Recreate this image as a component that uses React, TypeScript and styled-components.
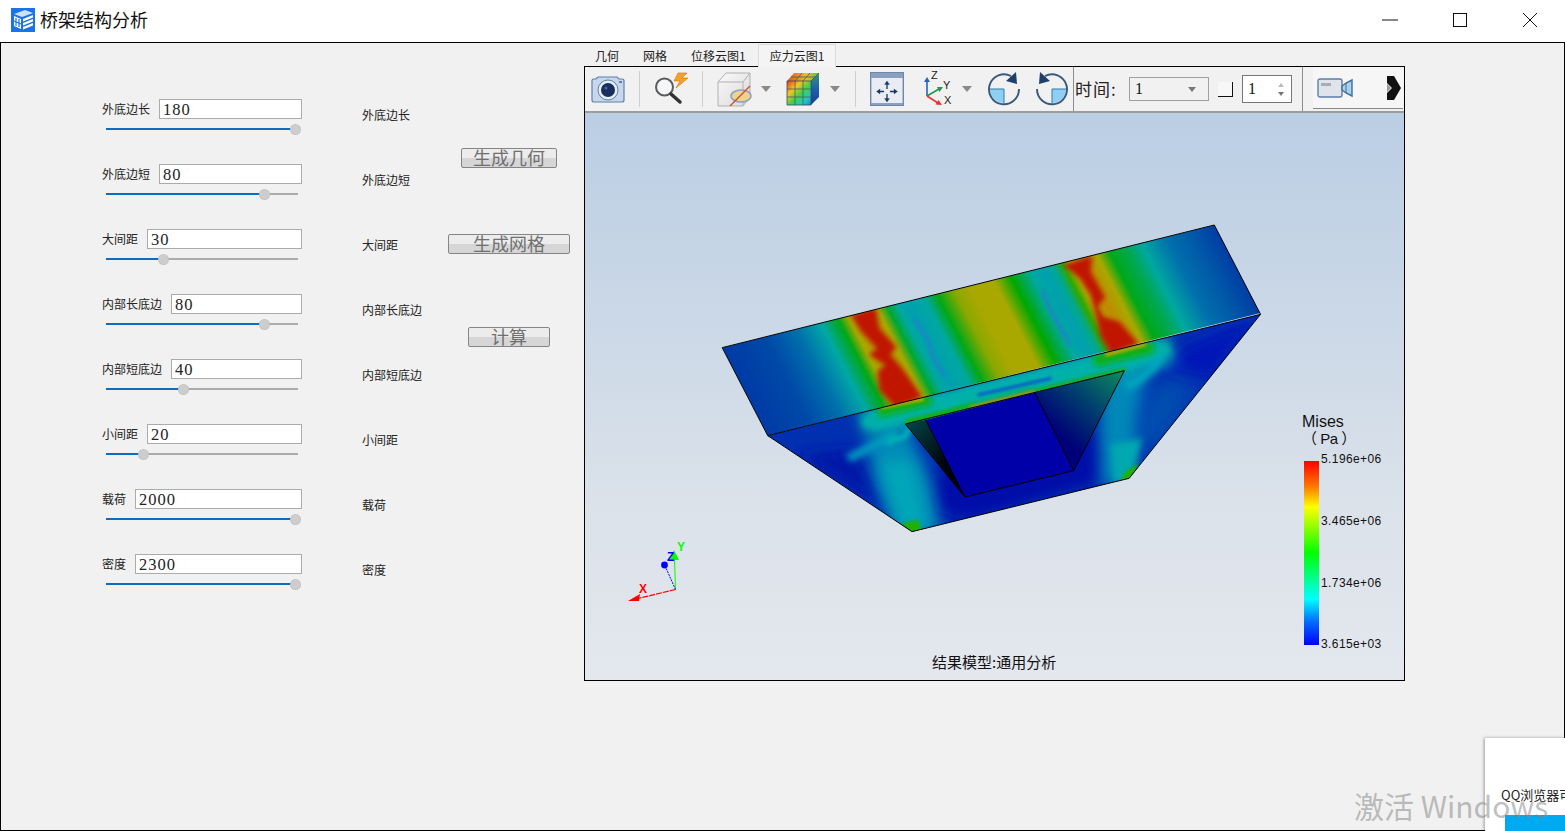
import React from "react";
import styled, { createGlobalStyle } from "styled-components";

const CJK = `"Noto Sans CJK SC", "Noto Sans", sans-serif`;
const SERIF = `"Liberation Serif", "Noto Sans CJK SC", serif`;

const Global = createGlobalStyle`
  html, body { margin: 0; padding: 0; background: #fff; overflow: hidden; }
  * { box-sizing: border-box; }
`;

const Page = styled.div`
  position: relative; width: 1565px; height: 831px; overflow: hidden;
  display: flex; flex-direction: column; background: #fff; font-family: ${CJK};
`;
const TitleBar = styled.header`
  height: 42px; display: flex; align-items: center; padding: 0 0 3px 11px; flex: none;
`;
const AppTitle = styled.h1`
  margin: -1px 0 0 5px; font-size: 18px; font-weight: 400; color: #111; line-height: 24px; flex: 1;
`;
const WinBtn = styled.div`
  width: 70px; height: 38px; display: flex; align-items: center; justify-content: center; flex: none;
`;
const Body = styled.main`
  flex: 1; display: flex; background: #f1f1f1; border: 1px solid #000; min-height: 0;
`;
const Form = styled.section`
  width: 201px; margin-left: 100px; padding-top: 56px; flex: none;
`;
const Field = styled.div`height: 65px;`;
const FieldHead = styled.div`display: flex; align-items: center; height: 20px; gap: 10px;`;
const FieldLabel = styled.span`font-size: 12px; line-height: 20px; color: #222; white-space: nowrap; padding-left: 1px; margin-right: -1px;`;
const FieldInput = styled.input`
  flex: 1; min-width: 0; height: 20px; border: 1px solid #ababab; background: #fff; padding: 2px 0 0 3px;
  font-family: ${SERIF}; font-size: 16.5px; letter-spacing: 1px; color: #222; outline: none; border-radius: 0;
`;
const Slider = styled.div`
  position: relative; margin: 5px 0 0 5px; width: 192px; height: 10px; display: flex; align-items: center;
`;
const Track = styled.div`width: 100%; height: 2px; background: #ababab;`;
const Fill = styled.div`position: absolute; left: 0; top: 4px; height: 2px; background: #0f6cbd;`;
const Thumb = styled.div`
  position: absolute; top: -0.5px; width: 11px; height: 11px; margin-left: -5px; border-radius: 50%;
  background: #cdcdcd; border: 1px dotted #bbb;
`;
const Captions = styled.section`
  width: 72px; margin-left: 60px; padding-top: 39px; flex: none;
`;
const Caption = styled.div`height: 65px; display: flex; align-items: center; font-size: 12px; color: #222; line-height: 65px;`;
const Actions = styled.section`
  width: 150px; flex: none; display: flex; flex-direction: column; align-items: center;
`;
const ActionBtn = styled.button<{ $w: number; $top: number }>`
  width: ${p => p.$w}px; height: 20px; margin-top: ${p => p.$top}px; padding: 0 0 2px;
  border: 1px solid #858585; border-radius: 2px;
  background: linear-gradient(#ececec 0 50%, #d6d6d6 50% 100%);
  font-family: ${CJK}; font-size: 18px; line-height: 18px; font-weight: 400; color: #707070;
  display: flex; align-items: center; justify-content: center;
`;
const Viewer = styled.section`
  width: 821px; flex: none; padding-top: 1px; height: 638px; display: flex; flex-direction: column;
`;
const Tabs = styled.nav`display: flex; height: 22px; margin-left: -1px; flex: none; position: relative; z-index: 1;`;
const Tab = styled.div<{ $active?: boolean }>`
  padding: 0 12px; height: ${p => (p.$active ? 23 : 22)}px; font-size: 12px; line-height: 24px; color: #222; white-space: nowrap;
  ${p => p.$active ? `background: #f4f4f4; border: 1px solid #dcdcdc; border-bottom: 0; padding: 0 11px; line-height: 22px;` : ``}
`;
const Frame = styled.div`
  flex: 1; border: 1px solid #000; display: flex; flex-direction: column; min-height: 0; background: #f1f1f1;
`;
const Toolbar = styled.div`
  height: 46px; flex: none; display: flex; align-items: center; background: #f1f1f1; border-bottom: 2px solid #9c9c9c;
`;
const Tool = styled.div<{ $ml: number }>`
  margin-left: ${p => p.$ml}px; display: flex; align-items: center; flex: none;
`;
const Sep = styled.div<{ $ml: number; $strong?: boolean }>`
  margin-left: ${p => p.$ml}px; width: 1px; flex: none;
  height: ${p => (p.$strong ? 44 : 36)}px; background: ${p => (p.$strong ? "#8e8e8e" : "#cfcfcf")};
`;
const Caret = styled.div<{ $ml: number }>`
  margin-left: ${p => p.$ml}px; flex: none; width: 0; height: 0;
  border-left: 5px solid transparent; border-right: 5px solid transparent; border-top: 6px solid #8a8a8a;
`;
const TimeLabel = styled.span`
  margin-left: 1px; width: 45px; font-size: 17px; letter-spacing: 1px; color: #222; line-height: 24px; white-space: nowrap; flex: none;
`;
const Combo = styled.div`
  margin-left: 9px; width: 80px; height: 24px; border: 1px solid #a0a0a0; flex: none;
  display: flex; align-items: center; justify-content: space-between; padding: 0 12px 0 5px;
  font-family: ${SERIF}; font-size: 16px; color: #111;
`;
const ComboCaret = styled.i`
  width: 0; height: 0; border-left: 4px solid transparent; border-right: 4px solid transparent; border-top: 5px solid #777;
`;
const Check = styled.div`
  margin-left: 9px; width: 15px; height: 15px; flex: none;
  border-right: 1.5px solid #111; border-bottom: 1.5px solid #111; background: #f7f7f7;
`;
const Spin = styled.div`
  margin-left: 9px; width: 50px; height: 28px; flex: none; background: #fff; border: 1px solid #777;
  display: flex; align-items: center; justify-content: space-between; padding: 0 7px 0 5px;
  font-family: ${SERIF}; font-size: 16px; color: #111;
`;
const SpinArrows = styled.div`display: flex; flex-direction: column; gap: 5px;`;
const SpinUp = styled.i`display: block; width: 0; height: 0; border-left: 3px solid transparent; border-right: 3px solid transparent; border-bottom: 4px solid #bbb;`;
const SpinDown = styled.i`display: block; width: 0; height: 0; border-left: 3px solid transparent; border-right: 3px solid transparent; border-top: 4px solid #777;`;
const VideoBtn = styled.div`
  margin-left: 10px; width: 90px; height: 42px; flex: none; display: flex; align-items: center; justify-content: space-between;
  padding: 0 2px 0 4px; background: #f6f6f6; border-bottom: 1px solid #888; margin-top: -2px;
`;
const Canvas = styled.div`
  position: relative; flex: 1; min-height: 0;
  background: linear-gradient(#bacee4 0%, #c8d6e6 30%, #dbe2ea 70%, #e4e7ee 100%);
`;
const Scene = styled.svg`display: block; width: 819px; height: 567px;`;
const LegendTitle = styled.div`
  position: absolute; left: 717px; top: 300px; font-size: 16px; line-height: 17px; color: #111; font-family: "Liberation Sans", ${CJK};
  white-space: pre;
`;
const LegendUnit = styled.span`font-size: 15px; letter-spacing: -0.5px;`;
const ColorBar = styled.div`
  position: absolute; left: 719px; top: 348px; width: 15px; height: 184px;
  background: linear-gradient(#ff0000 0%, #ff7a00 14%, #ffff00 25%, #00ff00 50%, #00ffff 75%, #0070ff 87%, #0000ff 100%);
`;
const Tick = styled.div<{ $top: number }>`
  position: absolute; left: 736px; top: ${p => p.$top}px; font-family: "Liberation Sans", sans-serif; font-size: 12px; letter-spacing: .4px;
  line-height: 14px; color: #111;
`;
const ResultNote = styled.div`
  position: absolute; left: 347px; top: 539px; font-size: 15px; line-height: 20px; color: #111; white-space: nowrap;
`;
const Popup = styled.aside`
  position: absolute; left: 1485px; top: 738px; width: 80px; height: 93px; background: #fff;
  box-shadow: -1px 0 3px rgba(0,0,0,.35);
  font-size: 13px; line-height: 18px; color: #222; padding: 48px 0 0 16px; white-space: nowrap; overflow: hidden;
`;
const PopupBtn = styled.div`margin: 11px 0 0 4px; height: 20px; width: 80px; background: #00aaf0;`;
const Watermark = styled.div`
  position: absolute; left: 1354px; top: 784px; font-size: 30px; line-height: 42px; color: rgba(130,130,130,.5);
  font-family: "Noto Sans CJK SC", sans-serif; white-space: nowrap;
`;

const fields = [
  ["外底边长", "180", 0.984],
  ["外底边短", "80", 0.823],
  ["大间距", "30", 0.297],
  ["内部长底边", "80", 0.823],
  ["内部短底边", "40", 0.401],
  ["小间距", "20", 0.193],
  ["载荷", "2000", 0.984],
  ["密度", "2300", 0.984],
] as const;

const AppIcon = () => (
  <svg width="24" height="24" viewBox="0 0 24 24">
    <rect width="24" height="24" fill="#1a73e8" />
    <path d="M3 6 L14 2 L22 5 L11 9Z" fill="#cfe0fb" />
    <path d="M3 8 L10 11 V21 L3 18Z" fill="#fff" />
    <path d="M5 10v8M8 11v8M3 13l7 3" stroke="#1a73e8" strokeWidth="1.2" />
    <path d="M12 11 L22 7 V9.5 L12 13.5Z M12 15 L22 11 V13.5 L12 17.5Z M12 19 L22 15 V17.5 L12 21.5Z" fill="#fff" />
  </svg>
);
const CameraIcon = () => (
  <svg width="34" height="28" viewBox="0 0 34 28">
    <path d="M1 5.5 Q1 4 3 4 H5 L7 2 H26 L28 4 H31 Q33 4 33 5.5 V25 Q33 27 31 27 H3 Q1 27 1 25Z" fill="#c7d6ea" stroke="#5f80ab" strokeWidth="1.2" />
    <circle cx="17" cy="15" r="10" fill="#e8eef6" stroke="#5f80ab" />
    <circle cx="17" cy="15" r="7" fill="#17305f" />
    <circle cx="15" cy="13" r="1.6" fill="#3f64a0" />
    <rect x="28" y="6" width="3" height="2" fill="#5f80ab" />
  </svg>
);
const SearchIcon = () => (
  <svg width="36" height="34" viewBox="0 0 36 34">
    <path d="M24 1 L33 1 L28 6 L34 6 L22 16 L26 9 L20 9Z" fill="#f2a12e" stroke="#d97f16" strokeWidth=".7" />
    <circle cx="10.5" cy="15" r="8.5" fill="#f4f6f8" stroke="#5b5b5b" strokeWidth="2" />
    <path d="M17 22 L26 30" stroke="#333" strokeWidth="3.4" strokeLinecap="round" />
  </svg>
);
const ClipCubeIcon = () => (
  <svg width="36" height="36" viewBox="0 0 36 36">
    <defs>
      <linearGradient id="cubeFace" x1="0" y1="0" x2="1" y2="1"><stop offset="0" stopColor="#fafafa" /><stop offset="1" stopColor="#d9d9d9" /></linearGradient>
    </defs>
    <path d="M1 11 L9 2 H33 V26 L26 35 H1Z" fill="url(#cubeFace)" stroke="#b0b0b0" />
    <path d="M1 11 H26 V35 M26 11 L33 2" fill="none" stroke="#b0b0b0" />
    <ellipse cx="24" cy="25" rx="10" ry="6" fill="#ecd38f" stroke="#8fa3bd" strokeWidth="1.5" />
    <path d="M13 35 L33 15" stroke="#d0532c" strokeWidth="1.4" />
  </svg>
);
const ColorCubeIcon = () => (
  <svg width="34" height="34" viewBox="0 0 34 34">
    <defs>
      <linearGradient id="frontRain" x1="0" y1="0" x2="1" y2="1">
        <stop offset="0" stopColor="#e8351f" /><stop offset=".3" stopColor="#f2c81e" /><stop offset=".55" stopColor="#3fd04a" /><stop offset=".8" stopColor="#1fc8c8" /><stop offset="1" stopColor="#1f78d8" />
      </linearGradient>
      <linearGradient id="topRain" x1="0" y1="0" x2="1" y2="0">
        <stop offset="0" stopColor="#e0502a" /><stop offset=".6" stopColor="#e8c028" /><stop offset="1" stopColor="#5cc040" />
      </linearGradient>
      <linearGradient id="sideRain" x1="0" y1="0" x2="0" y2="1">
        <stop offset="0" stopColor="#2f9a70" /><stop offset=".5" stopColor="#1f5fb0" /><stop offset="1" stopColor="#1a3f90" />
      </linearGradient>
    </defs>
    <path d="M1 9 L8 1 H33 L25 9Z" fill="url(#topRain)" />
    <path d="M25 9 L33 1 V25 L25 33Z" fill="url(#sideRain)" />
    <rect x="1" y="9" width="24" height="24" fill="url(#frontRain)" />
    <path d="M9 9V33M17 9V33M1 17H25M1 25H25M9 9L16 1M17 9L24 1M5 5H29" stroke="#4a5a62" strokeWidth=".8" fill="none" />
    <path d="M1 9H25V33H1Z M25 9L33 1" stroke="#3a4a58" strokeWidth=".8" fill="none" />
  </svg>
);
const FitIcon = () => (
  <svg width="34" height="34" viewBox="0 0 34 34">
    <rect x=".7" y=".7" width="32.6" height="32.6" fill="#e9edf3" stroke="#6f86a8" strokeWidth="1.4" />
    <rect x="1" y="1" width="32" height="5" fill="#8ba0bf" />
    <path d="M1 32 H33" stroke="#8ba0bf" strokeWidth="2" />
    <g stroke="#15355f" strokeWidth="1.3" fill="#15355f">
      <path d="M17 12V17M17 22V27M9 19.5H14M20 19.5H25" />
      <path d="M17 9l-2.5 3.5h5Z M17 30l-2.5-3.5h5Z M6.5 19.5l3.5-2.5v5Z M27.5 19.5l-3.5-2.5v5Z" strokeWidth=".3" />
    </g>
  </svg>
);
const AxesIcon = () => (
  <svg width="36" height="36" viewBox="0 0 36 36" style={{ fontFamily: "Liberation Sans, sans-serif" }}>
    <path d="M5 25 V10" stroke="#2563c9" strokeWidth="1.6" />
    <path d="M5 6 l-3 5 h6Z" fill="#2563c9" />
    <path d="M5 25 L17 18" stroke="#1f9a48" strokeWidth="1.6" />
    <path d="M21 16 l-6 0 l2.5 5Z" fill="#1f9a48" />
    <path d="M5 25 L16 32" stroke="#e2352b" strokeWidth="1.6" />
    <path d="M20 34 l-6.5 -0.5 l3 -4.5Z" fill="#e2352b" />
    <text x="9" y="8" fontSize="11" fill="#222">Z</text>
    <text x="21" y="18" fontSize="11" fill="#222">Y</text>
    <text x="22" y="33" fontSize="11" fill="#222">X</text>
  </svg>
);
const RotateIcon = ({ flip }: { flip?: boolean }) => (
  <svg width="34" height="34" viewBox="0 0 34 34">
    <g transform={flip ? "translate(34 0) scale(-1 1)" : undefined}>
      <path d="M3 17 H17 V31 A14 14 0 0 1 3 17Z" fill="#8fd0f2" />
      <path d="M3 17 H17 V31" fill="none" stroke="#2a7cb0" strokeWidth="1" />
      <path d="M24 4 A15 15 0 1 0 32 17" fill="none" stroke="#3a5a7c" strokeWidth="1.9" />
      <path d="M30 12 L19 9 L29 0Z" fill="#1f3f68" />
    </g>
  </svg>
);
const VideoIcon = () => (
  <svg width="36" height="20" viewBox="0 0 36 20">
    <rect x="1" y="1" width="24" height="18" rx="2" fill="#dfe3ea" stroke="#5f7fa8" strokeWidth="1.4" />
    <rect x="4" y="5" width="10" height="3" fill="#a8adb5" />
    <path d="M25 8 L29 5 L35 2 V18 L29 15 L25 12Z" fill="#a9d2ea" stroke="#3f6f9c" strokeWidth="1.4" />
    <path d="M29 5V15" stroke="#3f6f9c" />
  </svg>
);
const MoreIcon = () => (
  <svg width="14" height="24" viewBox="0 0 14 24">
    <path d="M0 0 H7 L14 12 L7 24 H0 L0 17 L5 12 L0 7Z" fill="#111" />
    <path d="M0 8 L4 12 L0 16Z" fill="#999" />
  </svg>
);

const Model = () => (
  <Scene viewBox="585 113 819 567">
    <defs>
      <linearGradient id="topBands" x1="0" y1="0" x2="1" y2="0">
        <stop offset="0" stopColor="#003aa6" />
        <stop offset=".09" stopColor="#004aa8" />
        <stop offset=".15" stopColor="#0070ac" />
        <stop offset=".20" stopColor="#00a8a6" />
        <stop offset=".235" stopColor="#00a818" />
        <stop offset=".255" stopColor="#a8a800" />
        <stop offset=".285" stopColor="#c08a00" />
        <stop offset=".315" stopColor="#a8a800" />
        <stop offset=".335" stopColor="#00a830" />
        <stop offset=".355" stopColor="#00a8a0" />
        <stop offset=".375" stopColor="#00a0b0" />
        <stop offset=".41" stopColor="#00a8a0" />
        <stop offset=".435" stopColor="#00a818" />
        <stop offset=".47" stopColor="#8aa800" />
        <stop offset=".50" stopColor="#a8a800" />
        <stop offset=".55" stopColor="#a8a800" />
        <stop offset=".585" stopColor="#00a800" />
        <stop offset=".625" stopColor="#00a8a0" />
        <stop offset=".65" stopColor="#00a0b0" />
        <stop offset=".672" stopColor="#00a890" />
        <stop offset=".69" stopColor="#30a800" />
        <stop offset=".705" stopColor="#b0a800" />
        <stop offset=".73" stopColor="#c08a00" />
        <stop offset=".76" stopColor="#a8a800" />
        <stop offset=".785" stopColor="#00a818" />
        <stop offset=".82" stopColor="#00a850" />
        <stop offset=".85" stopColor="#00a8a0" />
        <stop offset=".90" stopColor="#0070ac" />
        <stop offset=".95" stopColor="#0058a8" />
        <stop offset="1" stopColor="#003ca4" />
      </linearGradient>
      <linearGradient id="leftWall" x1="0" y1="0" x2="1" y2="1">
        <stop offset="0" stopColor="#04484c" />
        <stop offset=".6" stopColor="#00060c" />
        <stop offset="1" stopColor="#000" />
      </linearGradient>
      <linearGradient id="rightWall" gradientUnits="userSpaceOnUse" x1="960" y1="650" x2="1140" y2="470">
        <stop offset="0" stopColor="#000078" />
        <stop offset=".45" stopColor="#003a70" />
        <stop offset="1" stopColor="#0c8a5c" />
      </linearGradient>
      <clipPath id="topClip"><polygon points="60,398 1390,30 1515,298 183,662" /></clipPath>
      <clipPath id="botClip"><polygon points="183,662 1515,298 1160,790 573,950" /></clipPath>
      <filter id="b3" filterUnits="userSpaceOnUse" x="0" y="0" width="1568" height="975"><feGaussianBlur stdDeviation="5" /></filter>
      <filter id="b5" filterUnits="userSpaceOnUse" x="0" y="0" width="1568" height="975"><feGaussianBlur stdDeviation="7" /></filter>
      <filter id="b6" filterUnits="userSpaceOnUse" x="0" y="0" width="1568" height="975"><feGaussianBlur stdDeviation="9" /></filter>
      <filter id="b14" filterUnits="userSpaceOnUse" x="0" y="0" width="1568" height="975"><feGaussianBlur stdDeviation="20" /></filter>
      <filter id="b26" filterUnits="userSpaceOnUse" x="0" y="0" width="1568" height="975"><feGaussianBlur stdDeviation="34" /></filter>
    </defs>
    <g transform="translate(700 215) scale(.37 .3333)">
      <g clipPath="url(#topClip)">
        <rect x="0" y="0" width="1" height="1" fill="url(#topBands)" transform="matrix(1332 -368 123 264 60 398)" />
        <polygon filter="url(#b5)" fill="#c01400" points="408,300 475,278 485,340 530,395 515,420 550,465 600,545 528,578 485,525 480,470 500,450 458,420 478,400 436,350" />
        <polygon filter="url(#b5)" fill="#c01400" points="982,150 1060,122 1056,170 1094,245 1076,275 1090,305 1134,320 1184,385 1110,418 1082,362 1072,310 1056,240 1026,190" />
        <path filter="url(#b3)" d="M578 310 L615 370 L630 430 L662 485" stroke="#1a86c4" strokeWidth="10" fill="none" />
        <path filter="url(#b3)" d="M925 225 L945 280 L965 320 L1000 390" stroke="#1a86c4" strokeWidth="10" fill="none" />
      </g>
      <g clipPath="url(#botClip)">
        <polygon points="183,662 1515,298 1160,790 573,950" fill="#0030b0" />
        <polygon filter="url(#b14)" fill="#0018a8" points="260,720 420,700 470,810 560,930 500,880" />
        <polygon filter="url(#b14)" fill="#0018b8" points="1300,400 1515,300 1380,500 1250,470" />
        <polygon filter="url(#b26)" fill="#0058b0" points="1230,520 1340,480 1240,690 1170,700" />
        <polygon filter="url(#b14)" fill="#0008a8" points="620,780 1020,640 1100,640 1100,800 720,920 640,890" />
        <polygon filter="url(#b14)" fill="#008cb8" points="450,680 560,640 625,800 650,960 535,960 480,830" />
        <polygon filter="url(#b14)" fill="#00a8b8" points="490,740 570,740 605,900 600,960 545,950" />
        <polygon filter="url(#b14)" fill="#0088b8" points="1085,480 1210,440 1180,620 1175,800 1085,820 1080,650" />
        <polygon filter="url(#b6)" fill="#00a8b0" points="1110,690 1195,670 1165,790 1120,810" />
        <path filter="url(#b6)" d="M400 730 C 440 710, 480 690, 530 655" stroke="#0098c0" strokeWidth="26" fill="none" />
        <polygon filter="url(#b3)" fill="#20b000" points="545,925 590,915 600,955 570,960" />
        <polygon filter="url(#b3)" fill="#20b000" points="1150,770 1185,745 1165,795 1135,800" />
        <path filter="url(#b14)" d="M440 625 L1270 400" stroke="#00b8b0" strokeWidth="90" fill="none" />
        <path filter="url(#b6)" d="M440 625 L1270 400" stroke="#00b0a8" strokeWidth="36" fill="none" />
        <path filter="url(#b5)" d="M510 690 C 520 650, 550 695, 565 640" stroke="#00b4b8" strokeWidth="16" fill="none" />
        <path filter="url(#b6)" d="M1150 515 C 1180 505, 1210 480, 1245 430" stroke="#00a8c0" strokeWidth="24" fill="none" />
        <path filter="url(#b6)" d="M480 590 L625 552" stroke="#10b010" strokeWidth="36" fill="none" />
        <path filter="url(#b6)" d="M1065 438 L1225 395" stroke="#10b010" strokeWidth="36" fill="none" />
        <path filter="url(#b3)" d="M490 578 L605 552" stroke="#e0a000" strokeWidth="9" fill="none" />
        <path filter="url(#b3)" d="M1095 420 L1205 388" stroke="#e0a000" strokeWidth="9" fill="none" />
        <path filter="url(#b3)" d="M555 622 L740 572" stroke="#12b010" strokeWidth="16" fill="none" />
        <path filter="url(#b3)" d="M905 528 L1150 462" stroke="#12b030" strokeWidth="14" fill="none" />
        <path filter="url(#b6)" d="M700 592 L905 530" stroke="#10b030" strokeWidth="24" fill="none" />
        <path filter="url(#b3)" d="M730 578 L905 530" stroke="#e08a00" strokeWidth="8" fill="none" />
        <path filter="url(#b3)" d="M750 540 L950 490" stroke="#0c48d0" strokeWidth="8" fill="none" />
      </g>
      <polygon points="610,615 905,533 1010,767 716,846" fill="#0000a8" />
      <polygon points="555,627 610,615 716,846" fill="url(#leftWall)" />
      <polygon points="905,533 1147,467 1010,767" fill="url(#rightWall)" />
      <g fill="none" stroke="#000" strokeWidth="1">
        <polygon vectorEffect="non-scaling-stroke" points="60,398 1390,30 1515,298 183,662" />
        <polyline vectorEffect="non-scaling-stroke" points="183,662 573,950 1160,790 1515,298" />
        <polygon vectorEffect="non-scaling-stroke" points="555,627 1147,467 1010,767 716,846" />
        <polyline vectorEffect="non-scaling-stroke" points="610,615 716,846" />
        <polyline vectorEffect="non-scaling-stroke" points="905,533 1010,767" />
      </g>
    </g>
    <g style={{ fontFamily: "Liberation Sans, sans-serif", fontWeight: 700 }}>
      <path d="M675.5 589.5 L636 599" stroke="#f00" strokeWidth="1.2" strokeDasharray="6 1" />
      <path d="M628 601 L640 594 L639 601Z" fill="#f00" />
      <path d="M675.5 589.5 L674.5 558" stroke="#0f0" strokeWidth="1" />
      <path d="M670 560 L674 550 L679 560Z" fill="#0f0" />
      <path d="M675.5 589.5 L666 568" stroke="#00f" strokeWidth="1" strokeDasharray="2 1" />
      <circle cx="664.5" cy="565" r="3.4" fill="#00f" />
      <text x="639" y="593" fontSize="12" fill="#f00">X</text>
      <text x="677" y="551" fontSize="12" fill="#0f0">Y</text>
      <text x="667" y="561" fontSize="12" fill="#00f">Z</text>
    </g>
  </Scene>
);

export default function App() {
  return (
    <Page>
      <Global />
      <TitleBar>
        <AppIcon />
        <AppTitle>桥架结构分析</AppTitle>
        <WinBtn>
          <svg width="16" height="2" viewBox="0 0 16 2"><path d="M0 1H16" stroke="#111" /></svg>
        </WinBtn>
        <WinBtn>
          <svg width="16" height="16" viewBox="0 0 16 16"><rect x="1.5" y="1.5" width="13" height="13" fill="none" stroke="#111" /></svg>
        </WinBtn>
        <WinBtn>
          <svg width="16" height="16" viewBox="0 0 16 16"><path d="M1 1L15 15M15 1L1 15" stroke="#111" /></svg>
        </WinBtn>
      </TitleBar>
      <Body>
        <Form>
          {fields.map(([label, value, f]) => (
            <Field key={label}>
              <FieldHead>
                <FieldLabel>{label}</FieldLabel>
                <FieldInput defaultValue={value} readOnly />
              </FieldHead>
              <Slider>
                <Track />
                <Fill style={{ width: `${f * 100}%` }} />
                <Thumb style={{ left: `${f * 100}%` }} />
              </Slider>
            </Field>
          ))}
        </Form>
        <Captions>
          {fields.map(([label]) => <Caption key={label}>{label}</Caption>)}
        </Captions>
        <Actions>
          <ActionBtn $w={96} $top={105}>生成几何</ActionBtn>
          <ActionBtn $w={122} $top={66}>生成网格</ActionBtn>
          <ActionBtn $w={82} $top={73}>计算</ActionBtn>
        </Actions>
        <Viewer>
          <Tabs>
            <Tab>几何</Tab>
            <Tab>网格</Tab>
            <Tab>位移云图1</Tab>
            <Tab $active>应力云图1</Tab>
          </Tabs>
          <Frame>
            <Toolbar>
              <Tool $ml={6}><CameraIcon /></Tool>
              <Sep $ml={14} />
              <Tool $ml={14}><SearchIcon /></Tool>
              <Sep $ml={12} />
              <Tool $ml={14}><ClipCubeIcon /></Tool>
              <Caret $ml={8} />
              <Tool $ml={15}><ColorCubeIcon /></Tool>
              <Caret $ml={10} />
              <Sep $ml={15} />
              <Tool $ml={14}><FitIcon /></Tool>
              <Tool $ml={18}><AxesIcon /></Tool>
              <Caret $ml={4} />
              <Tool $ml={15}><RotateIcon /></Tool>
              <Tool $ml={14}><RotateIcon flip /></Tool>
              <Sep $ml={4} $strong />
              <TimeLabel>时间:</TimeLabel>
              <Combo>1<ComboCaret /></Combo>
              <Check />
              <Spin>1<SpinArrows><SpinUp /><SpinDown /></SpinArrows></Spin>
              <Sep $ml={10} $strong />
              <VideoBtn><VideoIcon /><MoreIcon /></VideoBtn>
            </Toolbar>
            <Canvas>
              <Model />
              <LegendTitle>Mises{"\n"}<LegendUnit>（ Pa ）</LegendUnit></LegendTitle>
              <ColorBar />
              <Tick $top={339}>5.196e+06</Tick>
              <Tick $top={401}>3.465e+06</Tick>
              <Tick $top={463}>1.734e+06</Tick>
              <Tick $top={524}>3.615e+03</Tick>
              <ResultNote>结果模型:通用分析</ResultNote>
            </Canvas>
          </Frame>
        </Viewer>
      </Body>
      <Popup>QQ浏览器可<PopupBtn /></Popup>
      <Watermark>激活 Windows</Watermark>
    </Page>
  );
}
